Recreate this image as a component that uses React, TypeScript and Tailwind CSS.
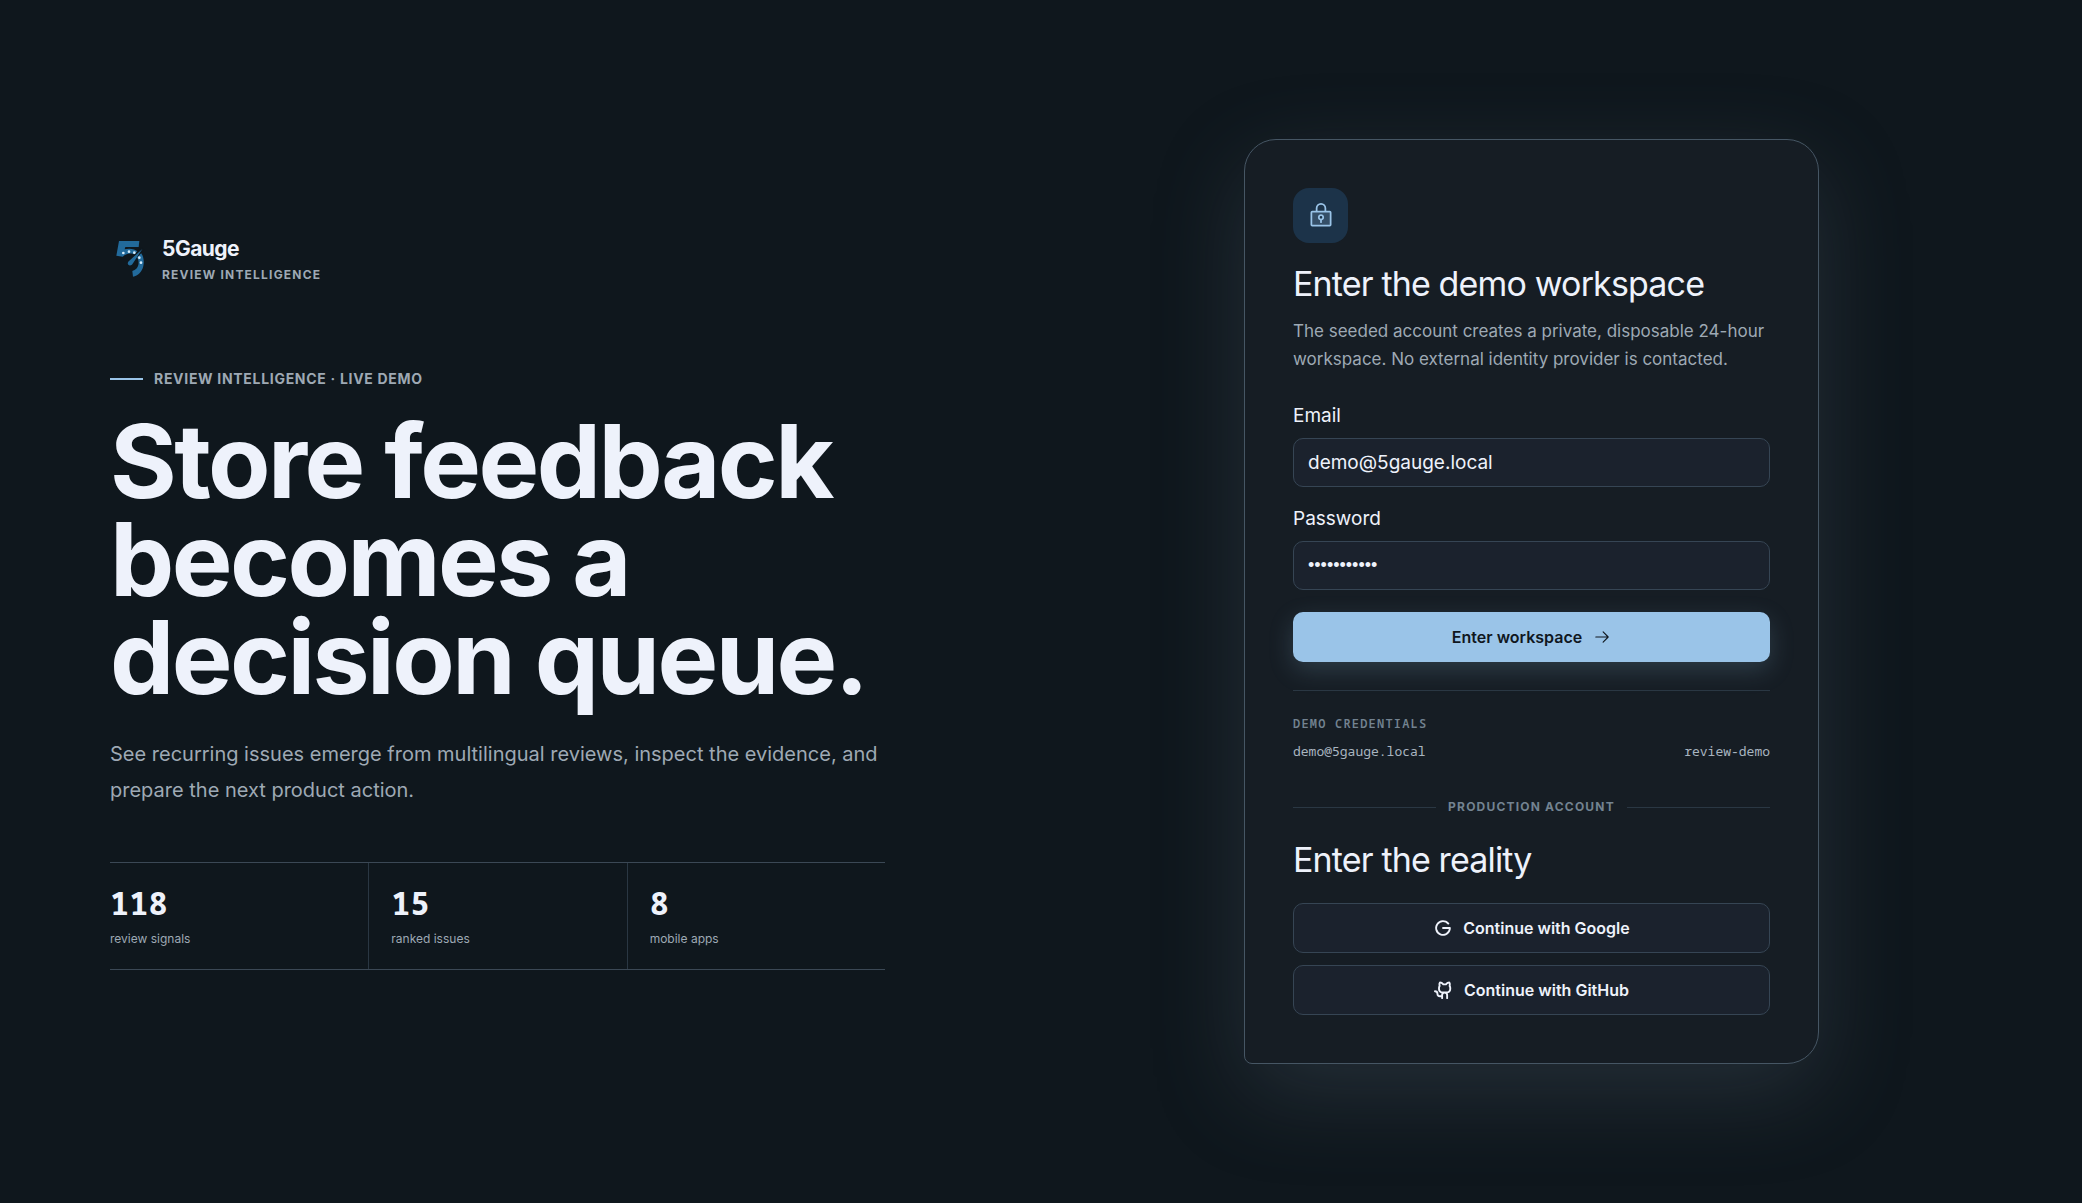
import React from 'react'
import { PiArrowRight, PiGithubLogoBold, PiGoogleLogoBold, PiLockKeyDuotone } from 'react-icons/pi'

const stats = [
  { value: '118', label: 'review signals' },
  { value: '15', label: 'ranked issues' },
  { value: '8', label: 'mobile apps' },
]

const fieldClass =
  'mt-2 h-[49px] w-full rounded-[10px] border border-[#364554] bg-[#1b222d] px-[14px] text-[#eef2fb] outline-none'

const providerClass =
  'flex h-[50px] w-full items-center justify-center gap-[10px] rounded-[10px] border border-[#364554] bg-[#1b222d] text-base font-semibold text-[#eef2fb]'

function Logo() {
  return (
    <svg viewBox="0 20 132 132" className="size-11" fill="none" aria-hidden="true">
      <path d="M27 26H88L86 44H46L44 51C60 47 74 50 84 58L76 68C62 60 48 64 38 73L19 70Z" fill="#226a9b" />
      <path d="M93 62C101 72 103 88 100 101C96 119 84 130 69 133L67 116C77 113 83 107 85 98C87 89 85 81 81 75Z" fill="#226a9b" />
      <path d="M98 48L56 94" stroke="#0f171d" strokeWidth="12" />
      <path d="M97 50L68 94C65 99 59 101 55 97C52 94 53 89 57 86Z" fill="#226a9b" />
      <g fill="#d5ecfb">
        <circle cx="40" cy="62" r="4" />
        <circle cx="57" cy="58" r="4" />
        <circle cx="73" cy="61" r="4" />
        <circle cx="88" cy="76" r="4" />
        <circle cx="93" cy="91" r="4" />
      </g>
    </svg>
  )
}

function Intro() {
  return (
    <section className="max-w-[775px] pt-1">
      <div className="flex items-center gap-2">
        <Logo />
        <div>
          <div className="text-[21px] leading-6 font-bold tracking-tight text-[#eef2fb]">5Gauge</div>
          <div className="mt-1 text-xs leading-5 font-bold tracking-widest text-[#9ea9b4] uppercase">Review intelligence</div>
        </div>
      </div>

      <p className="mt-[84px] flex items-center gap-[11px] text-sm leading-5 font-bold tracking-wider text-[#9ea9b4] uppercase">
        <span className="h-0.5 w-[33px] bg-[#9ac4e8]" />
        Review intelligence · Live demo
      </p>

      <h1 className="mt-[23px] text-[102px] leading-[98px] font-bold tracking-tight whitespace-nowrap text-[#eef2fb]">
        Store feedback
        <br />
        becomes a
        <br />
        decision queue.
      </h1>

      <p className="mt-[30px] text-xl leading-9 whitespace-nowrap text-[#9ea9b4]">
        See recurring issues emerge from multilingual reviews, inspect the evidence, and
        <br />
        prepare the next product action.
      </p>

      <dl className="mt-[54px] grid grid-cols-3 border-y border-[#3b4855]">
        {stats.map((s) => (
          <div key={s.label} className="flex h-[106px] flex-col-reverse justify-end border-l border-[#2a3743] pt-[22px] pl-[22px] first:border-l-0 first:pl-0">
            <dt className="mt-[10px] text-xs leading-4 text-[#9ea9b4]">{s.label}</dt>
            <dd className="font-['Noto_Sans_Mono','DejaVu_Sans_Mono',monospace] text-[32px] leading-9 font-bold text-[#eef2fb]">{s.value}</dd>
          </div>
        ))}
      </dl>
    </section>
  )
}

function LoginCard() {
  return (
    <section className="w-full max-w-[575px] rounded-[32px] rounded-bl-lg border border-[#465664] bg-[#161d24] p-12 shadow-[0_28px_90px_rgba(98,115,132,0.25)]">
      <div className="flex size-[55px] items-center justify-center rounded-2xl bg-[#1c3349]">
        <PiLockKeyDuotone className="size-7 text-[#9ac4e8]" />
      </div>
      <h2 className="mt-[18px] text-[34px] leading-[46px] tracking-tight text-[#eef2fb]">Enter the demo workspace</h2>
      <p className="mt-[10px] text-[17px] leading-7 text-[#9ea9b4]">
        The seeded account creates a private, disposable 24-hour workspace. No external identity provider is contacted.
      </p>

      <form className="mt-[29px]" onSubmit={(e) => e.preventDefault()}>
        <label htmlFor="email" className="block text-[19px] leading-7 text-[#eef2fb]">Email</label>
        <input id="email" type="email" defaultValue="demo@5gauge.local" className={fieldClass + ' text-[19px]'} />
        <label htmlFor="password" className="mt-[18px] block text-[19px] leading-7 text-[#eef2fb]">Password</label>
        <input
          id="password"
          type="password"
          defaultValue="review-demo"
          className={fieldClass + " font-['Liberation_Sans',sans-serif] text-lg"}
        />
        <button type="submit" className="mt-[22px] flex h-[50px] w-full items-center justify-center gap-[11px] rounded-[10px] bg-[#9ac4e8] text-base font-semibold text-[#10171e] shadow-[0_8px_24px_rgba(120,165,190,0.24)]">
          Enter workspace
          <PiArrowRight className="size-[18px]" />
        </button>
      </form>

      <div className="mt-7 border-t border-[#2a3743] pt-6 font-['Noto_Sans_Mono','DejaVu_Sans_Mono',monospace]">
        <div className="text-xs leading-[18px] font-semibold tracking-widest text-[#738391] uppercase">Demo credentials</div>
        <div className="mt-2 flex justify-between text-[13px] leading-5 text-[#a9b5c0]">
          <span>demo@5gauge.local</span>
          <span>review-demo</span>
        </div>
      </div>

      <div className="mt-9 flex items-center gap-3 text-xs leading-5 font-bold tracking-widest text-[#738391] uppercase">
        <span className="h-px flex-1 bg-[#2a3743]" />
        Production account
        <span className="h-px flex-1 bg-[#2a3743]" />
      </div>

      <h2 className="mt-5 text-[34px] leading-[46px] tracking-tight text-[#eef2fb]">Enter the reality</h2>
      <div className="mt-5 space-y-3">
        <button type="button" className={providerClass}>
          <PiGoogleLogoBold className="size-5" />
          Continue with Google
        </button>
        <button type="button" className={providerClass}>
          <PiGithubLogoBold className="size-5" />
          Continue with GitHub
        </button>
      </div>
    </section>
  )
}

export default function App() {
  return (
    <main className="grid min-h-screen grid-cols-2 items-center gap-[100px] bg-[#0f171d] px-[110px] font-['Inter','Liberation_Sans',sans-serif] text-[#eef2fb]">
      <Intro />
      <div className="flex justify-center">
        <LoginCard />
      </div>
    </main>
  )
}
